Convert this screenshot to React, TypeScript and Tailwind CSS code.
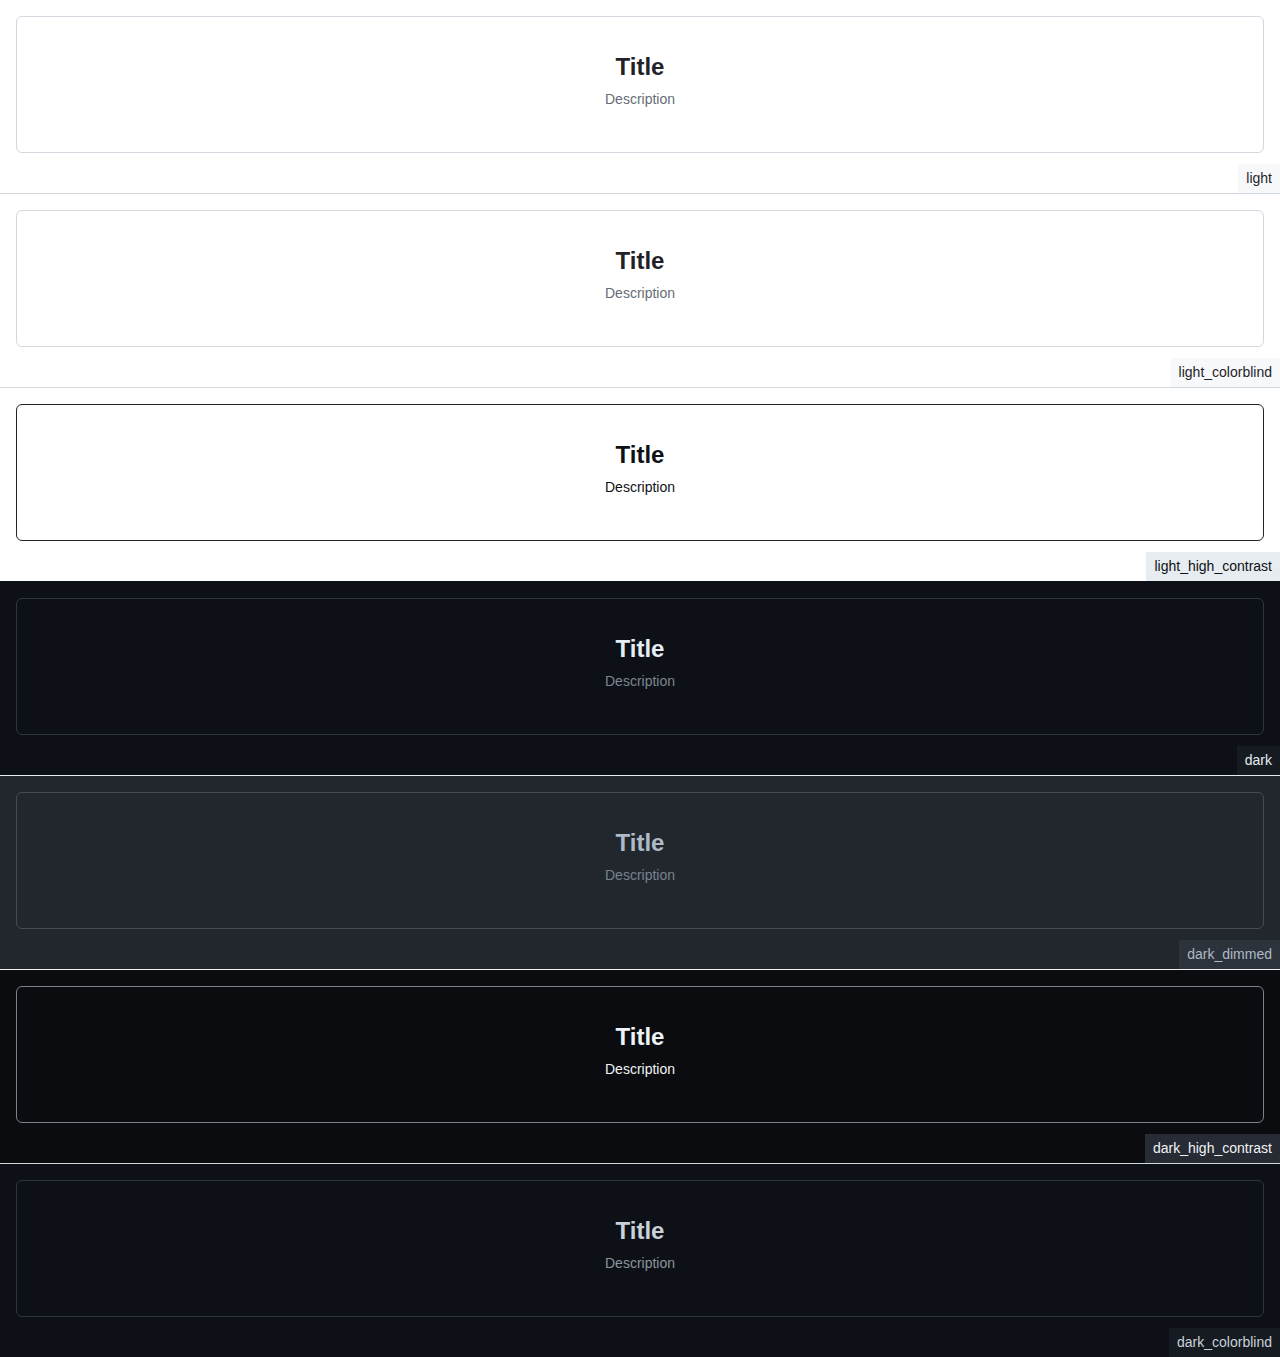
import React from 'react';

type Theme = {
  name: string;
  bg: string;
  card: string;
  title: string;
  desc: string;
  label: string;
  line: string;
};

const themes: Theme[] = [
  {
    name: 'light',
    bg: 'bg-white',
    card: 'border-[#d0d7de] bg-white',
    title: 'text-[#1f2328]',
    desc: 'text-[#656d76]',
    label: 'bg-[#f6f8fa] text-[#1f2328]',
    line: 'border-[#d0d7de]',
  },
  {
    name: 'light_colorblind',
    bg: 'bg-white',
    card: 'border-[#d0d7de] bg-white',
    title: 'text-[#1f2328]',
    desc: 'text-[#656d76]',
    label: 'bg-[#f6f8fa] text-[#1f2328]',
    line: 'border-[#d0d7de]',
  },
  {
    name: 'light_high_contrast',
    bg: 'bg-white',
    card: 'border-[#20252c] bg-white',
    title: 'text-[#0e1116]',
    desc: 'text-[#0e1116]',
    label: 'bg-[#e7ecf0] text-[#0e1116]',
    line: 'border-[#0d1117]',
  },
  {
    name: 'dark',
    bg: 'bg-[#0d1117]',
    card: 'border-[#30363d] bg-[#0d1117]',
    title: 'text-[#e6edf3]',
    desc: 'text-[#7d8590]',
    label: 'bg-[#161b22] text-[#e6edf3]',
    line: 'border-[#e6edf3]',
  },
  {
    name: 'dark_dimmed',
    bg: 'bg-[#22272e]',
    card: 'border-[#444c56] bg-[#22272e]',
    title: 'text-[#adbac7]',
    desc: 'text-[#768390]',
    label: 'bg-[#2d333b] text-[#adbac7]',
    line: 'border-[#f0f0f0]',
  },
  {
    name: 'dark_high_contrast',
    bg: 'bg-[#0a0c10]',
    card: 'border-[#7a828e] bg-[#0a0c10]',
    title: 'text-[#f0f3f6]',
    desc: 'text-[#f0f3f6]',
    label: 'bg-[#272b33] text-[#f0f3f6]',
    line: 'border-[#d0d7de]',
  },
  {
    name: 'dark_colorblind',
    bg: 'bg-[#0d1117]',
    card: 'border-[#30363d] bg-[#0d1117]',
    title: 'text-[#c9d1d9]',
    desc: 'text-[#8b949e]',
    label: 'bg-[#161b22] text-[#c9d1d9]',
    line: 'border-transparent',
  },
];

function Blankslate({ t }: { t: Theme }) {
  return (
    <div className={`border rounded-md h-[137px] pt-[35px] flex flex-col items-center ${t.card}`}>
      <h2 className={`text-2xl leading-[30px] font-bold mb-[7px] ${t.title}`}>Title</h2>
      <p className={`text-sm leading-5 ${t.desc}`}>Description</p>
    </div>
  );
}

export default function App() {
  return (
    <div className="font-['Liberation_Sans',Arial,sans-serif]">
      {themes.map((t) => (
        <section key={t.name} className={`border-b ${t.line} ${t.bg}`}>
          <div className="px-4 pt-4">
            <Blankslate t={t} />
          </div>
          <div className="flex justify-end mt-[11px]">
            <span className={`px-2 pt-1 pb-[5px] text-sm leading-5 ${t.label}`}>{t.name}</span>
          </div>
        </section>
      ))}
    </div>
  );
}
